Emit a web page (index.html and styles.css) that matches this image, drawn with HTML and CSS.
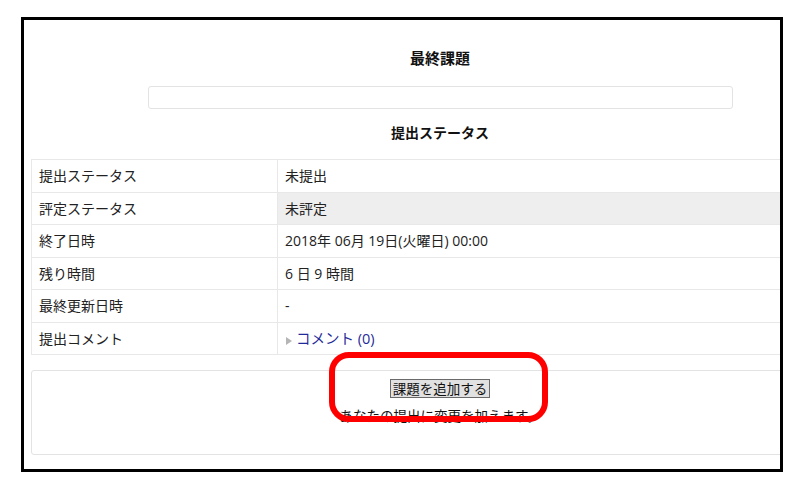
FILE: index.html
```html
<!DOCTYPE html>
<html lang="ja">
<head>
  <meta charset="UTF-8">
  <meta name="viewport" content="width=device-width, initial-scale=1.0">
  <title>最終課題</title>
  <link rel="stylesheet" href="styles.css">
</head>
<body>
  <div class="frame">
    <div class="content">
      <h2 class="title">最終課題</h2>
      <div class="intro-box"></div>
      <h3 class="status-heading">提出ステータス</h3>

      <table class="status-table">
        <tr>
          <td class="label">提出ステータス</td>
          <td>未提出</td>
        </tr>
        <tr>
          <td class="label">評定ステータス</td>
          <td class="shaded">未評定</td>
        </tr>
        <tr>
          <td class="label">終了日時</td>
          <td>2018年 06月 19日(火曜日) 00:00</td>
        </tr>
        <tr>
          <td class="label">残り時間</td>
          <td>6 日 9 時間</td>
        </tr>
        <tr>
          <td class="label">最終更新日時</td>
          <td>-</td>
        </tr>
        <tr>
          <td class="label">提出コメント</td>
          <td><span class="arrow"></span><a href="#" class="comment-link">コメント (0)</a></td>
        </tr>
      </table>

      <div class="submit-box">
        <button class="add-btn">課題を追加する</button>
        <p class="submit-note">あなたの提出に変更を加えます。</p>
      </div>
    </div>
  </div>

  <!-- red annotation -->
  <div class="highlight"></div>
</body>
</html>
```

FILE: styles.css
```css
body {
  margin: 0;
  background: #fff;
  font-family: "Open Sans", "Noto Sans CJK JP", sans-serif;
  color: #222;
}

.frame {
  margin: 17px 0 0 21px;
  width: 762px;
  height: 455px;
  box-sizing: border-box;
  border: 3px solid #000;
  overflow: hidden;
  background: #fff;
}

.content {
  width: 818px;
  padding-left: 7px;
}

.title {
  margin: 28px 0 0;
  font-size: 15px;
  line-height: 20px;
  font-weight: bold;
  text-align: center;
  color: #111;
}

.intro-box {
  margin: 18px 0 0 117px;
  width: 585px;
  height: 23px;
  box-sizing: border-box;
  border: 1px solid #e3e3e3;
  border-radius: 3px;
}

.status-heading {
  margin: 14px 0 16px;
  font-size: 14px;
  line-height: 20px;
  font-weight: bold;
  text-align: center;
  color: #111;
}

.status-table {
  width: 100%;
  border-collapse: collapse;
  font-size: 14px;
}

.status-table td {
  border: 1px solid #e8e8e8;
  padding: 6px 7px;
  line-height: 19.5px;
}

.status-table td.label {
  width: 231px;
}

.status-table td.shaded {
  background: #eee;
}

.arrow {
  display: inline-block;
  margin: 0 4px 0 1px;
  border-left: 6px solid #b5b5b5;
  border-top: 4px solid transparent;
  border-bottom: 4px solid transparent;
  vertical-align: -1px;
}

.comment-link {
  color: #1f2b9a;
  text-decoration: none;
  font-size: 14.5px;
}

.submit-box {
  margin-top: 15px;
  height: 85px;
  box-sizing: border-box;
  border: 1px solid #e3e3e3;
  border-radius: 3px;
  padding-top: 8px;
  text-align: center;
}

.add-btn {
  display: block;
  margin: 0 auto;
  font-family: "Noto Sans CJK JP", sans-serif;
  font-size: 13.5px;
  line-height: 15px;
  padding: 1px 2px;
  color: #111;
  background: #e1e1e1;
  border: 1px solid #6a6a6a;
  border-radius: 0;
}

.submit-note {
  margin: 8px 0 0;
  font-size: 13.5px;
  line-height: 20px;
  color: #111;
}

.highlight {
  position: absolute;
  left: 329px;
  top: 352px;
  width: 219px;
  height: 70px;
  box-sizing: border-box;
  border: 6px solid #f00;
  border-radius: 20px;
}
```
